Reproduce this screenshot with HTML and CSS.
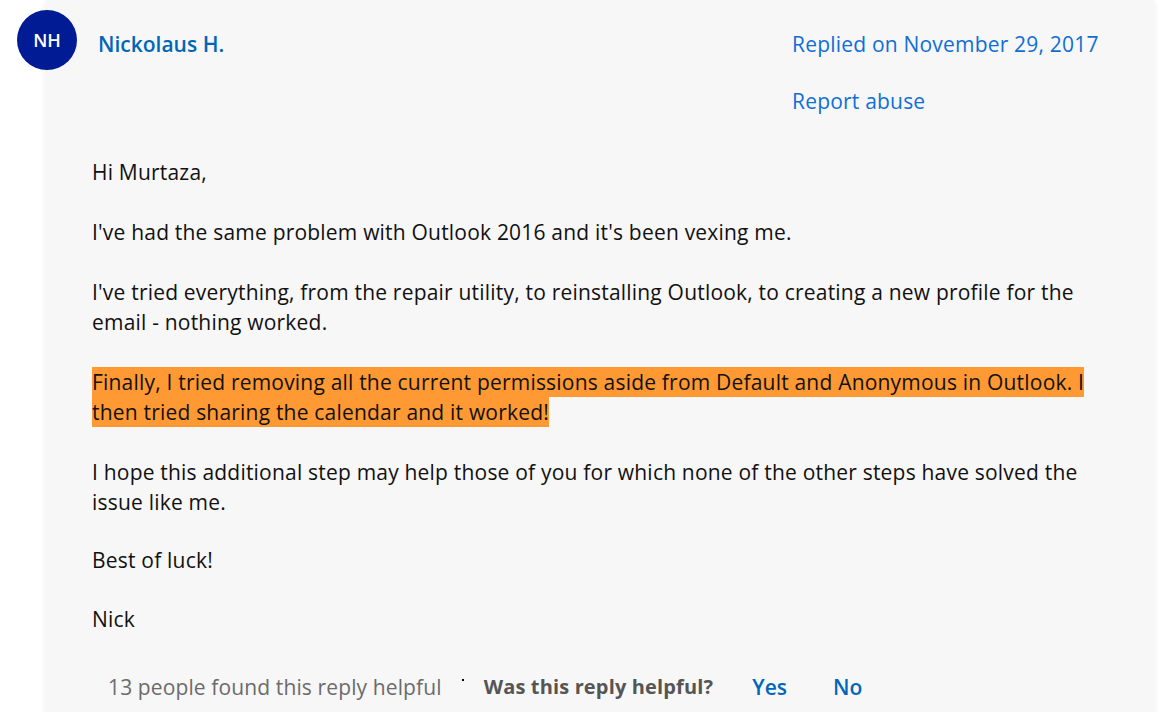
FILE: index.html
```html
<!DOCTYPE html>
<html>
<head>
<meta charset="utf-8">
<link rel="stylesheet" href="styles.css">
</head>
<body>
<div class="card">
  <div class="header">
    <div class="author">
      <div class="avatar">NH</div>
      <a class="name">Nickolaus H.</a>
    </div>
    <div class="meta">
      <a class="meta-link">Replied on November 29, 2017</a>
      <a class="meta-link">Report abuse</a>
    </div>
  </div>
  <div class="body">
    <p>Hi Murtaza,</p>
    <p>I've had the same problem with Outlook 2016 and it's been vexing me.</p>
    <p>I've tried everything, from the repair utility, to reinstalling Outlook, to creating a new profile for the email - nothing worked.</p>
    <p><span class="hl">Finally, I tried removing all the current permissions aside from Default and Anonymous in Outlook. I then tried sharing the calendar and it worked!</span></p>
    <p class="tight">I hope this additional step may help those of you for which none of the other steps have solved the issue like me.</p>
    <p class="tight-sm">Best of luck!</p>
    <p>Nick</p>
  </div>
  <div class="footer">
    <span class="count">13 people found this reply helpful</span>
    <span class="dot"></span>
    <span class="question">Was this reply helpful?</span>
    <a class="vote">Yes</a>
    <a class="vote">No</a>
  </div>
</div>
</body>
</html>
```
FILE: styles.css
```css
html, body {
  margin: 0;
  padding: 0;
  background: #ffffff;
  font-family: "Open Sans", "Noto Sans", sans-serif;
}
.card {
  margin-left: 45px;
  width: 1110px;
  height: 712px;
  background: #f7f7f7;
  box-shadow: 0 2px 6px rgba(0,0,0,0.06);
  box-sizing: border-box;
}
.header {
  display: flex;
  justify-content: space-between;
  padding-top: 10px;
}
.author {
  display: flex;
  align-items: flex-start;
  margin-left: -28px;
}
.avatar {
  width: 60px;
  height: 60px;
  border-radius: 50%;
  background: #001b94;
  color: #fff;
  font-size: 18px;
  font-weight: 600;
  display: flex;
  align-items: center;
  justify-content: center;
}
.name {
  margin-left: 21px;
  margin-top: 19px;
  font-size: 21px;
  line-height: 30px;
  font-weight: 600;
  color: #0067b8;
}
.meta {
  width: 320px;
  margin-right: 43px;
  display: flex;
  flex-direction: column;
  gap: 27px;
  padding-top: 19px;
}
.meta-link {
  font-size: 21px;
  line-height: 30px;
  letter-spacing: 0.2px;
  color: #0f6fd6;
}
.body {
  padding: 41px 55px 0 47px;
}
.body p {
  margin: 0 0 30px 0;
  font-size: 21px;
  line-height: 30px;
  letter-spacing: 0.2px;
  color: #111;
}
.body p.tight {
  margin-bottom: 28px;
}
.body p.tight-sm {
  margin-bottom: 29px;
}
.body p.last {
  margin-bottom: 0;
}
.hl {
  background: #ff9933;
  padding: 1px 0;
}
.footer {
  display: flex;
  align-items: center;
  padding-left: 63px;
  margin-top: 38px;
  font-size: 21px;
  line-height: 30px;
}
.count {
  color: #6b6b6b;
  letter-spacing: 0.12px;
}
.dot {
  width: 2px;
  height: 2px;
  background: #000;
  margin: 0 20px;
  align-self: flex-start;
  margin-top: 7px;
}
.question {
  color: #555;
  font-weight: 700;
  font-size: 20px;
  letter-spacing: 0.15px;
}
.vote {
  color: #0067b8;
  font-weight: 600;
  margin-left: 39px;
}
.vote + .vote {
  margin-left: 46px;
}
```
